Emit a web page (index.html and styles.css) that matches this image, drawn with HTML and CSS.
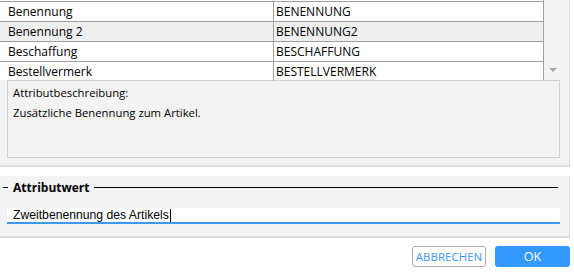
FILE: index.html
```html
<!DOCTYPE html>
<html lang="de">
<head>
    <meta charset="UTF-8">
    <title>Attribut bearbeiten</title>
    <link rel="stylesheet" href="styles.css">
</head>
<body>

    <div class="panel attributes">
        <div class="grid-area">
            <div class="grid">
                <div class="row cut"></div>
                <div class="row">
                    <div class="cell name">Benennung</div>
                    <div class="cell value">BENENNUNG</div>
                </div>
                <div class="row selected">
                    <div class="cell name">Benennung 2</div>
                    <div class="cell value">BENENNUNG2</div>
                </div>
                <div class="row">
                    <div class="cell name">Beschaffung</div>
                    <div class="cell value">BESCHAFFUNG</div>
                </div>
                <div class="row">
                    <div class="cell name">Bestellvermerk</div>
                    <div class="cell value">BESTELLVERMERK</div>
                </div>
            </div>
            <div class="scrollbar">
                <span class="arrow-down"></span>
            </div>
        </div>
        <div class="description">
            <p class="desc-title">Attributbeschreibung:</p>
            <p class="desc-text">Zusätzliche Benennung zum Artikel.</p>
        </div>
    </div>

    <div class="panel value-panel">
        <div class="legend">
            <span class="legend-dash"></span>
            <span class="legend-text">Attributwert</span>
            <span class="legend-line"></span>
        </div>
        <div class="value-input">
            <span class="input-text">Zweitbenennung des Artikels</span><span class="caret"></span>
        </div>
    </div>

    <div class="buttons">
        <button type="button" class="btn btn-cancel">ABBRECHEN</button>
        <button type="button" class="btn btn-ok">OK</button>
    </div>

</body>
</html>
```

FILE: styles.css
```css
body {
    font-family: "Open Sans", "Noto Sans", sans-serif;
    background-color: #fff;
    color: #000;
    margin: 0;
    padding: 0;
    width: 574px;
    height: 275px;
    overflow: hidden;
}
.panel {
    background-color: #f3f3f3;
    width: 569px;
    border-right: 1px solid #dcdcdc;
    border-bottom: 2px solid #dcdcdc;
    box-sizing: content-box;
}
.attributes {
    height: 165px;
}
.grid-area {
    display: flex;
    height: 80px;
}
.grid {
    width: 543px;
    background-color: #fff;
    border-right: 1px solid #a0a0a0;
}
.row {
    display: flex;
    height: 19px;
    border-top: 1px solid #a0a0a0;
    font-size: 12px;
    line-height: 19px;
}
.row.cut {
    height: 1px;
    border-top: none;
}
.row.selected {
    background-color: #efefef;
}
.cell {
    white-space: nowrap;
    overflow: hidden;
}
.name {
    width: 265px;
    padding-left: 8px;
    border-right: 1px solid #a0a0a0;
}
.value {
    flex: 1;
    padding-left: 2px;
}
.scrollbar {
    flex: 1;
    position: relative;
    background-color: #f3f3f3;
}
.arrow-down {
    position: absolute;
    left: 5px;
    top: 68px;
    width: 0;
    height: 0;
    border-left: 4px solid transparent;
    border-right: 4px solid transparent;
    border-top: 4px solid #a8a8a8;
}
.description {
    margin-left: 7px;
    height: 76px;
    border: 1px solid #d0d0d0;
    padding: 0 5px;
    box-sizing: content-box;
    width: 541px;
    font-size: 11.3px;
}
.description p {
    margin: 0;
    line-height: 20px;
}
.desc-title {
    margin-top: 2px !important;
}
.value-panel {
    margin-top: 9px;
    height: 59px;
    padding-top: 1px;
}
.legend {
    display: flex;
    align-items: center;
    height: 20px;
    padding-left: 3px;
    padding-right: 11px;
}
.legend-dash {
    width: 5px;
    height: 1px;
    background-color: #000;
}
.legend-text {
    font-weight: bold;
    font-size: 12px;
    margin: 0 4px 0 5px;
}
.legend-line {
    flex: 1;
    height: 1px;
    background-color: #000;
}
.value-input {
    margin: 11px 9px 0 7px;
    height: 14px;
    background-color: #fff;
    border-bottom: 2px solid #3c98f0;
    border-radius: 0 3px 0 0;
    font-family: "Liberation Sans", Arial, sans-serif;
    font-size: 12.2px;
    line-height: 14px;
    padding-left: 6px;
    display: flex;
    align-items: center;
}
.caret {
    width: 1px;
    height: 13px;
    background-color: #000;
    margin-left: 1px;
}
.buttons {
    display: flex;
    justify-content: flex-end;
    gap: 9px;
    margin-top: 8px;
    padding-right: 4px;
}
.btn {
    font-family: "Open Sans", "Noto Sans", sans-serif;
    font-size: 11.5px;
    height: 21px;
    border-radius: 3px;
    padding: 0;
    cursor: pointer;
}
.btn-cancel {
    width: 74px;
    background-color: #fff;
    color: #3c98f0;
    border: 1px solid #a8a8a8;
}
.btn-ok {
    width: 75px;
    background-color: #3399ff;
    color: #fff;
    border: none;
    font-size: 12.5px;
}
```
